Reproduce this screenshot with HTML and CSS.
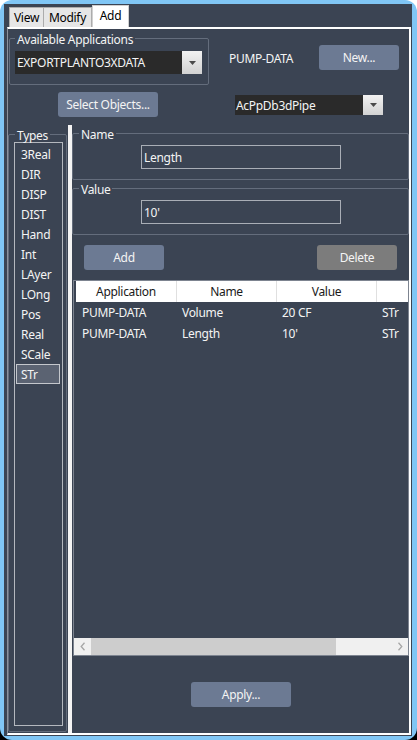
FILE: index.html
```html
<!DOCTYPE html>
<html>
<head>
<meta charset="utf-8">
<link rel="stylesheet" href="styles.css">
</head>
<body>
<div class="window">
  <div class="panel">
    <div class="tabs">
      <div class="tab tab-view">View</div>
      <div class="tab tab-modify">Modify</div>
      <div class="tab tab-add">Add</div>
    </div>
    <div class="frame">
      <div class="row1">
        <div class="group group-apps">
          <div class="group-label">Available Applications</div>
          <div class="combo combo-apps">
            <span class="combo-text">EXPORTPLANTO3XDATA</span>
            <span class="combo-btn"><svg width="7" height="4" viewBox="0 0 7 4"><path d="M0 0H7L3.5 4Z" fill="#4a4a4a"/></svg></span>
          </div>
        </div>
        <div class="pump">PUMP-DATA</div>
        <div class="btn btn-new">New...</div>
      </div>
      <div class="row2">
        <div class="btn btn-select">Select Objects...</div>
        <div class="combo combo-class">
          <span class="combo-text">AcPpDb3dPipe</span>
          <span class="combo-btn"><svg width="7" height="4" viewBox="0 0 7 4"><path d="M0 0H7L3.5 4Z" fill="#4a4a4a"/></svg></span>
        </div>
      </div>
      <div class="bottom">
        <div class="types-col">
          <div class="group group-types">
            <div class="group-label">Types</div>
            <div class="list">
              <div class="item">3Real</div>
              <div class="item">DIR</div>
              <div class="item">DISP</div>
              <div class="item">DIST</div>
              <div class="item">Hand</div>
              <div class="item">Int</div>
              <div class="item">LAyer</div>
              <div class="item">LOng</div>
              <div class="item">Pos</div>
              <div class="item">Real</div>
              <div class="item">SCale</div>
              <div class="item selected">STr</div>
            </div>
          </div>
        </div>
        <div class="splitter"></div>
        <div class="right-col">
          <div class="group group-field">
            <div class="group-label">Name</div>
            <div class="input">Length</div>
          </div>
          <div class="group group-field group-value">
            <div class="group-label">Value</div>
            <div class="input">10'</div>
          </div>
          <div class="actions">
            <div class="btn btn-add">Add</div>
            <div class="btn btn-delete">Delete</div>
          </div>
          <div class="table">
            <div class="thead">
              <div class="th">Application</div>
              <div class="th">Name</div>
              <div class="th">Value</div>
              <div class="th th-last"></div>
            </div>
            <div class="tr">
              <div class="td td-first">PUMP-DATA</div>
              <div class="td">Volume</div>
              <div class="td">20 CF</div>
              <div class="td">STr</div>
            </div>
            <div class="tr">
              <div class="td td-first">PUMP-DATA</div>
              <div class="td">Length</div>
              <div class="td">10'</div>
              <div class="td">STr</div>
            </div>
            <div class="tbody-fill"></div>
            <div class="hscroll">
              <div class="sb-arrow"><svg width="6" height="9" viewBox="0 0 6 9"><path d="M4.5 0.8L1.2 4.5L4.5 8.2" fill="none" stroke="#a6a6a6" stroke-width="1.3"/></svg></div>
              <div class="sb-thumb"></div>
              <div class="sb-track"></div>
              <div class="sb-arrow"><svg width="6" height="9" viewBox="0 0 6 9"><path d="M1.5 0.8L4.8 4.5L1.5 8.2" fill="none" stroke="#a6a6a6" stroke-width="1.3"/></svg></div>
            </div>
          </div>
          <div class="btn btn-apply">Apply...</div>
        </div>
      </div>
    </div>
  </div>
</div>
</body>
</html>
```

FILE: styles.css
```css
html, body {
  margin: 0;
  padding: 0;
  width: 417px;
  height: 740px;
  overflow: hidden;
  background: linear-gradient(#ffffff 50%, #000000 50%);
}
body {
  font-family: "Noto Sans", "Open Sans", sans-serif;
  font-size: 12px;
  letter-spacing: -0.3px;
  color: #f4f4f4;
}
.window {
  box-sizing: border-box;
  width: 417px;
  height: 740px;
  background: #80c6f5;
  border-radius: 12px;
  padding: 4px 5px 4px 4px;
}
.panel {
  box-sizing: border-box;
  height: 100%;
  background: #3b4453;
  display: flex;
  flex-direction: column;
  padding: 0 1px 1px 3px;
}
.tabs {
  height: 23px;
  display: flex;
  align-items: flex-end;
  padding-left: 2px;
  flex: none;
}
.tab {
  box-sizing: border-box;
  height: 20px;
  line-height: 19px;
  color: #000;
  background: #e6e6e6;
  border: 1px solid #acacac;
  border-bottom: none;
  text-align: center;
}
.tab-view { width: 35px; }
.tab-modify { width: 48px; border-left: none; }
.tab-add {
  width: 37px;
  height: 22px;
  line-height: 19px;
  background: #ffffff;
  border-color: #d0d0d0;
}
.frame {
  flex: 1;
  display: flex;
  flex-direction: column;
  border: 2px solid #ffffff;
  border-left: 1px solid #8c929c;
  min-height: 0;
}
.row1 {
  display: flex;
  align-items: flex-start;
  height: 56px;
  flex: none;
}
.group {
  box-sizing: border-box;
  border: 1px solid #646d7c;
  border-radius: 2px;
}
.group-label {
  width: fit-content;
  line-height: 17px;
  height: 16px;
  margin-top: -8px;
  padding: 0 2px;
  background: #3b4453;
  white-space: nowrap;
}
.group-apps {
  margin-top: 9px;
  margin-left: 1px;
  width: 200px;
  height: 47px;
}
.group-apps .group-label { margin-left: 5px; }
.combo {
  box-sizing: border-box;
  display: flex;
  align-items: stretch;
  background: #2a2a2a;
}
.combo-text {
  flex: 1;
  padding-left: 2px;
  white-space: nowrap;
  overflow: hidden;
}
.combo-btn {
  width: 20px;
  display: flex;
  align-items: center;
  justify-content: center;
  background: linear-gradient(#f2f2f2, #d2d2d2);
}
.combo-apps {
  margin-top: 4px;
  margin-left: 5px;
  width: 187px;
  height: 23px;
  line-height: 24px;
}
.combo-class {
  margin-top: 3px;
  margin-left: 77px;
  width: 148px;
  height: 20px;
  line-height: 21px;
}
.combo-class .combo-text { padding-left: 1px; }
.pump {
  margin-top: 21px;
  margin-left: 20px;
  line-height: 17px;
}
.btn {
  box-sizing: border-box;
  height: 25px;
  line-height: 25px;
  text-align: center;
  background: #6c7a93;
  border-radius: 3px;
  color: #f4f4f4;
  flex: none;
}
.btn-new {
  margin-top: 16px;
  margin-left: auto;
  margin-right: 10px;
  width: 80px;
}
.row2 {
  display: flex;
  align-items: flex-start;
  margin-top: 7px;
  height: 25px;
  flex: none;
}
.btn-select {
  margin-left: 50px;
  width: 100px;
}
.bottom {
  margin-top: 8px;
  flex: 1;
  display: flex;
  min-height: 0;
}
.types-col {
  width: 60px;
  flex: none;
}
.group-types {
  margin-top: 9px;
  width: 59px;
  height: 598px;
}
.group-types .group-label { margin-left: 6px; }
.list {
  box-sizing: border-box;
  margin-top: -1px;
  margin-left: 5px;
  width: 49px;
  height: 584px;
  border: 1px solid #b4b8be;
  padding-top: 1px;
}
.item {
  box-sizing: border-box;
  margin-left: 1px;
  width: 44px;
  height: 20px;
  line-height: 19px;
  border: 1px solid transparent;
  padding-left: 4px;
}
.item.selected {
  background: #5b6372;
  border-color: #c4c7cc;
}
.splitter {
  width: 4px;
  background: #f4f4f4;
  flex: none;
}
.right-col {
  width: 337px;
  flex: none;
  display: flex;
  flex-direction: column;
  align-items: flex-start;
}
.group-field {
  margin-top: 8px;
  width: 337px;
  height: 47px;
}
.group-field .group-label { margin-left: 6px; }
.input {
  box-sizing: border-box;
  margin-top: 3px;
  margin-left: 68px;
  width: 200px;
  height: 24px;
  line-height: 23px;
  border: 1px solid #a9aeb6;
  padding-left: 2px;
}
.actions {
  display: flex;
  justify-content: space-between;
  width: 337px;
  box-sizing: border-box;
  padding: 0 12px;
  margin-top: 10px;
}
.btn-add { width: 80px; }
.btn-delete { width: 80px; background: #7c7c7c; }
.table {
  box-sizing: border-box;
  margin-top: 10px;
  margin-left: 1px;
  width: 336px;
  height: 376px;
  border: 1px solid #7d8490;
  display: flex;
  flex-direction: column;
}
.thead {
  display: grid;
  grid-template-columns: 101px 100px 100px 1fr;
  margin-left: 2px;
  height: 21px;
  background: #ffffff;
  color: #1a1a1a;
  line-height: 21px;
  flex: none;
}
.th {
  text-align: center;
  border-right: 1px solid #e0e0e0;
}
.th-last { border-right: none; }
.tr {
  display: grid;
  grid-template-columns: 101px 100px 100px 1fr;
  margin-left: 2px;
  height: 21px;
  line-height: 22px;
  flex: none;
}
.td {
  padding-left: 5px;
  white-space: nowrap;
  overflow: hidden;
}
.td-first { padding-left: 6px; }
.tbody-fill { flex: 1; }
.hscroll {
  height: 17px;
  display: flex;
  background: #f0f0f0;
  flex: none;
}
.sb-arrow {
  width: 17px;
  display: flex;
  align-items: center;
  justify-content: center;
}
.sb-thumb {
  width: 245px;
  background: #cdcdcd;
}
.sb-track { flex: 1; }
.btn-apply {
  margin-top: 26px;
  margin-left: 119px;
  width: 100px;
}
```
